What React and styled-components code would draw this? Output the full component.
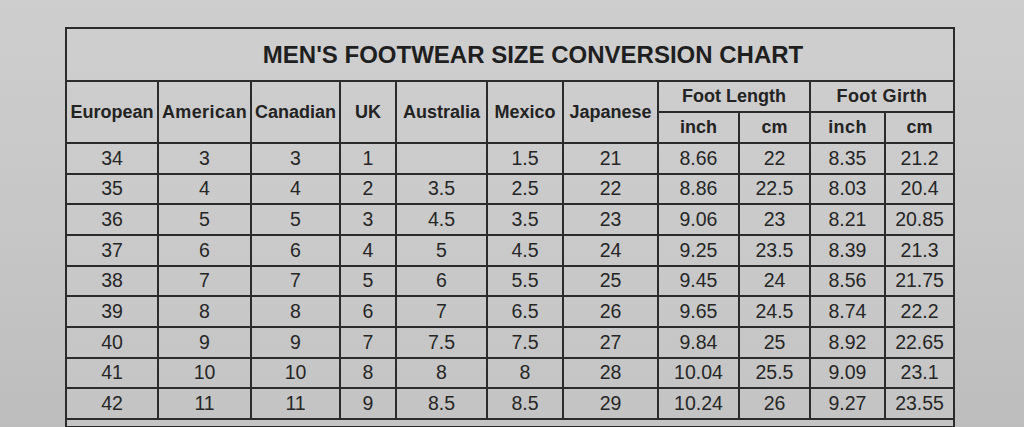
import React from 'react';
import styled, { createGlobalStyle } from 'styled-components';

const GlobalStyle = createGlobalStyle`
  html, body {
    margin: 0;
    padding: 0;
  }
  body {
    width: 1024px;
    height: 427px;
    overflow: hidden;
    background: linear-gradient(180deg, #cecece 0%, #c6c6c6 55%, #bdbdbd 100%);
    font-family: "Liberation Sans", Arial, sans-serif;
    color: #222;
  }
`;

const Page = styled.div`
  padding: 27px 0 0 65px;
`;

const Table = styled.table`
  border-collapse: collapse;
  table-layout: fixed;
  width: 888px;
  background: rgba(210, 210, 210, 0.35);
  border: 2px solid #2b2b2b;
`;

const Title = styled.th`
  height: 51px;
  font-size: 24px;
  font-weight: bold;
  color: #1f1f1f;
  text-align: center;
  border: 2px solid #2b2b2b;
  padding: 0 0 0 46px;
`;

const Head = styled.th`
  height: 29px;
  font-size: 18px;
  font-weight: bold;
  letter-spacing: ${p => (p.wide ? '0.4px' : '0')};
  color: #232323;
  text-align: center;
  border: 2px solid #2b2b2b;
  padding: 0;
  white-space: nowrap;
  overflow: hidden;
`;

const Row = styled.tr`
  height: 30.67px;
`;

const Cell = styled.td`
  font-size: 19.5px;
  color: #262626;
  text-align: center;
  border: 2px solid #2b2b2b;
  padding: 0;
  line-height: 1;
`;

const Tail = styled.td`
  height: 6px;
  padding: 0;
  border-left: 2px solid #2b2b2b;
  border-right: 2px solid #2b2b2b;
  border-bottom: none;
`;

const widths = [92, 93, 89, 56, 91, 76, 95, 81, 71, 75, 69];

const rows = [
  ['34', '3', '3', '1', '', '1.5', '21', '8.66', '22', '8.35', '21.2'],
  ['35', '4', '4', '2', '3.5', '2.5', '22', '8.86', '22.5', '8.03', '20.4'],
  ['36', '5', '5', '3', '4.5', '3.5', '23', '9.06', '23', '8.21', '20.85'],
  ['37', '6', '6', '4', '5', '4.5', '24', '9.25', '23.5', '8.39', '21.3'],
  ['38', '7', '7', '5', '6', '5.5', '25', '9.45', '24', '8.56', '21.75'],
  ['39', '8', '8', '6', '7', '6.5', '26', '9.65', '24.5', '8.74', '22.2'],
  ['40', '9', '9', '7', '7.5', '7.5', '27', '9.84', '25', '8.92', '22.65'],
  ['41', '10', '10', '8', '8', '8', '28', '10.04', '25.5', '9.09', '23.1'],
  ['42', '11', '11', '9', '8.5', '8.5', '29', '10.24', '26', '9.27', '23.55'],
];

const systems = ['European', 'American', 'Canadian', 'UK', 'Australia', 'Mexico', 'Japanese'];

export default function App() {
  return (
    <>
      <GlobalStyle />
      <Page>
        <Table>
          <colgroup>
            {widths.map((w, i) => (
              <col key={i} style={{ width: w }} />
            ))}
          </colgroup>
          <thead>
            <tr>
              <Title colSpan={11}>MEN'S FOOTWEAR SIZE CONVERSION CHART</Title>
            </tr>
            <tr>
              {systems.map(s => (
                <Head key={s} rowSpan={2} wide={s === 'American'}>
                  {s}
                </Head>
              ))}
              <Head colSpan={2}>Foot Length</Head>
              <Head colSpan={2} wide>Foot Girth</Head>
            </tr>
            <tr>
              <Head>inch</Head>
              <Head>cm</Head>
              <Head wide>inch</Head>
              <Head>cm</Head>
            </tr>
          </thead>
          <tbody>
            {rows.map(r => (
              <Row key={r[0]}>
                {r.map((v, i) => (
                  <Cell key={i}>{v}</Cell>
                ))}
              </Row>
            ))}
            <tr>
              <Tail colSpan={11} />
            </tr>
          </tbody>
        </Table>
      </Page>
    </>
  );
}
